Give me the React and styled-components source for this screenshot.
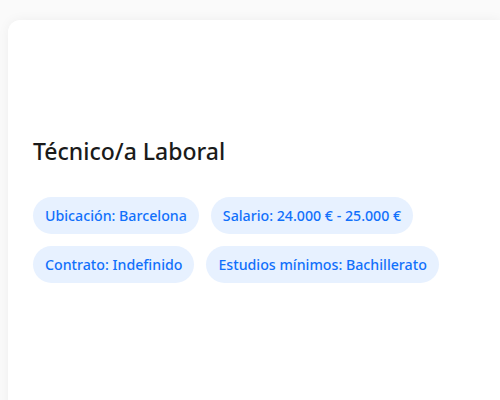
import React from "react";
import styled, { createGlobalStyle } from "styled-components";

const Global = createGlobalStyle`
  html, body { margin: 0; padding: 0; background: #fafafa; }
  body { font-family: "Noto Sans", "Open Sans", sans-serif; }
`;

const Page = styled.div`
  padding: 20px 0 0 8px;
  height: 400px;
  box-sizing: border-box;
  overflow: hidden;
`;

const Card = styled.div`
  background: #ffffff;
  border-radius: 12px 0 0 0;
  box-shadow: 0 0 12px rgba(0, 0, 0, 0.05);
  min-height: 420px;
  padding: 116px 25px 25px;
  box-sizing: border-box;
`;

const Title = styled.h2`
  margin: 0 0 31px;
  font-size: 23px;
  line-height: 30px;
  font-weight: 500;
  color: #1a1a1a;
`;

const Tags = styled.div`
  display: flex;
  flex-wrap: wrap;
  gap: 12px;
  max-width: 420px;
`;

const Tag = styled.span`
  display: inline-flex;
  align-items: center;
  height: 37px;
  padding: 0 12px;
  border-radius: 19px;
  background: #e7f1ff;
  color: #1170fb;
  font-size: 14.2px;
  font-weight: 500;
  white-space: nowrap;
`;

const tags = [
  "Ubicación: Barcelona",
  "Salario: 24.000 € - 25.000 €",
  "Contrato: Indefinido",
  "Estudios mínimos: Bachillerato",
];

export default function App() {
  return (
    <>
      <Global />
      <Page>
        <Card>
          <Title>Técnico/a Laboral</Title>
          <Tags>
            {tags.map((t) => (
              <Tag key={t}>{t}</Tag>
            ))}
          </Tags>
        </Card>
      </Page>
    </>
  );
}
